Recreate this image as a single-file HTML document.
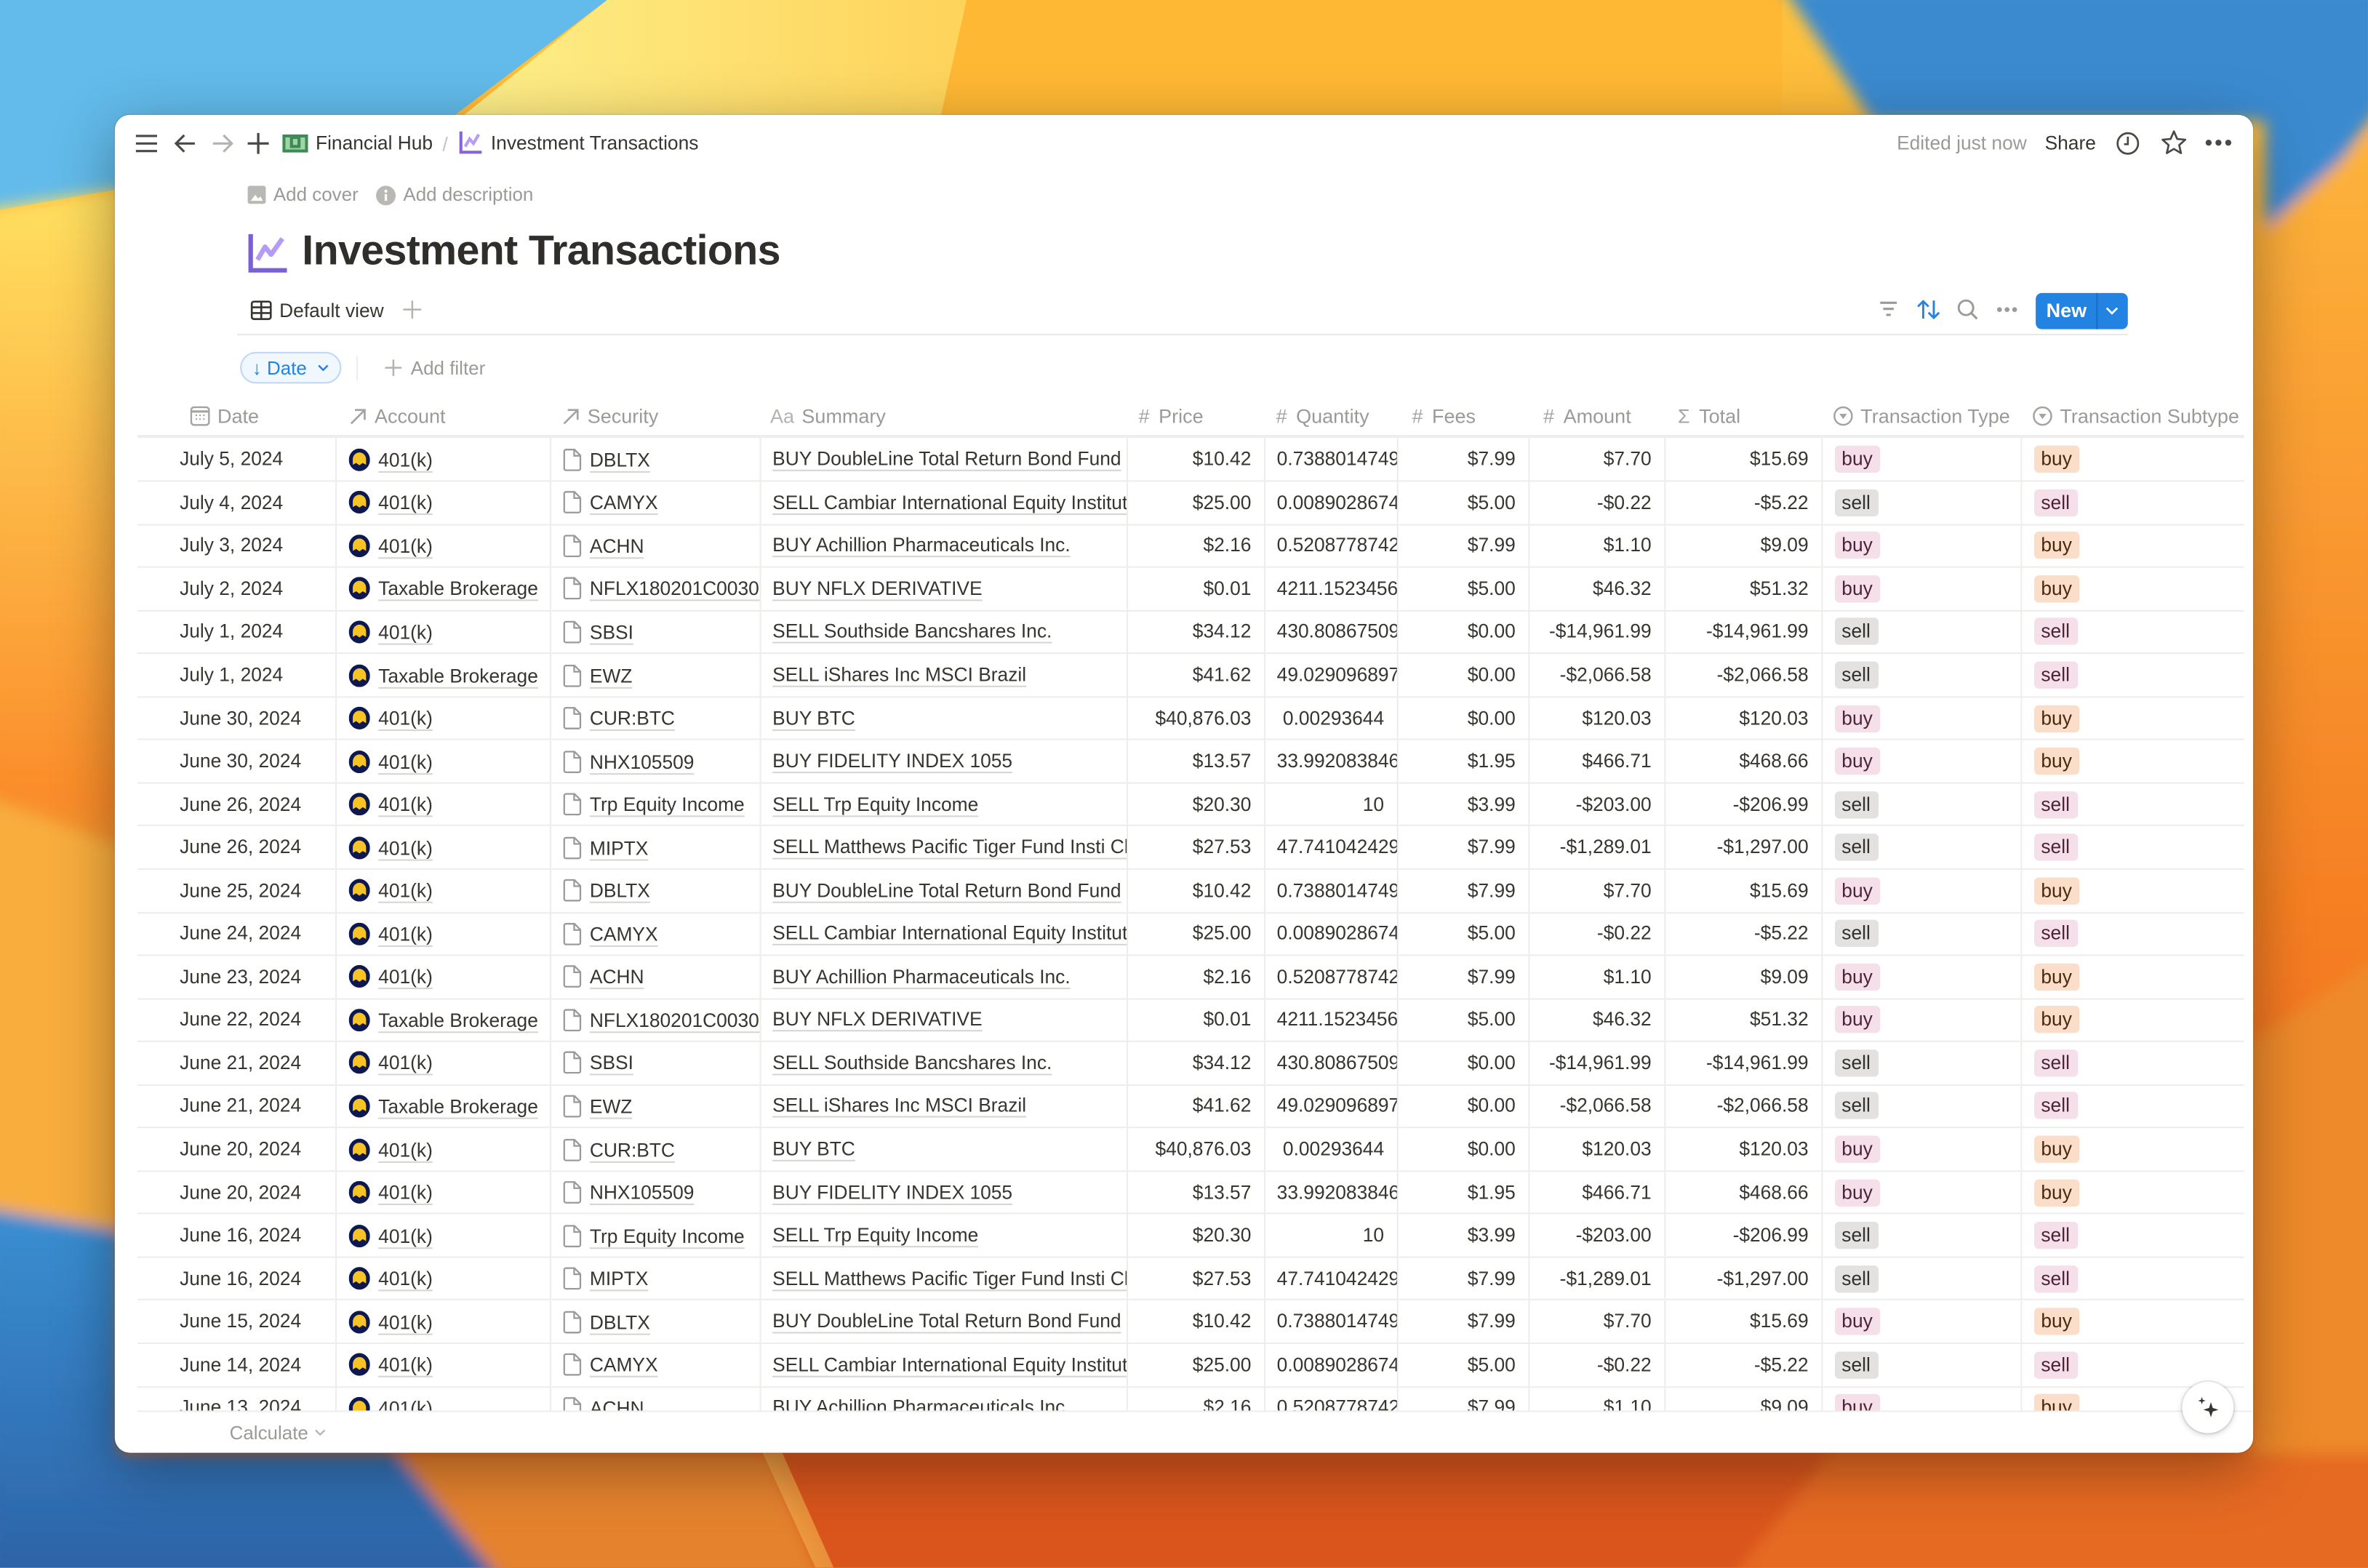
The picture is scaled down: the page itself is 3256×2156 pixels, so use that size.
<!DOCTYPE html>
<html><head><meta charset="utf-8">
<style>
*{margin:0;padding:0;box-sizing:border-box}
html,body{width:3256px;height:2156px;overflow:hidden;background:#e8822c}
#s{position:absolute;left:0;top:0;width:1568px;height:1038px;transform:scale(2.0765);transform-origin:0 0;font-family:"Liberation Sans",sans-serif;color:#37352f}
.bg{position:absolute;left:0;top:0}
.win{position:absolute;left:76px;top:76px;width:1416px;height:886px;background:#fff;border-radius:10px;box-shadow:0 10px 40px rgba(0,0,0,.35),0 0 0 .5px rgba(0,0,0,.15);overflow:hidden}
.a{position:absolute;white-space:nowrap}
.g{color:#9b9a97}
svg{display:block}
.tb{position:absolute;left:91px;top:290px;width:1395px;height:644px;overflow:hidden}
table{border-collapse:collapse;table-layout:fixed;width:1395px;font-size:12.7px}
td{height:28.55px;border-bottom:1px solid #ededeb;border-left:1px solid #ededeb;white-space:nowrap;overflow:hidden;padding:0 8px;vertical-align:middle}
td:first-child{border-left:none;padding-left:28px}
td:last-child{border-right:1px solid #ededeb}
.r{text-align:right}
.u{text-decoration:underline;text-decoration-color:#d6d5d2;text-underline-offset:3px;text-decoration-thickness:1px}
.ic{display:inline-block;vertical-align:-3px;margin-right:6px}
.t{display:inline-block;padding:0 5px;border-radius:3px;line-height:18px;font-size:12.7px}
.pb{background:#f5e0e9;color:#4c2337}
.gs{background:#e3e2e0;color:#32302c}
.ob{background:#fadec9;color:#49290e}
.hd{position:absolute;top:262px;height:27px;font-size:13px;color:#9b9a97;display:flex;align-items:center;white-space:nowrap}
.hd svg{margin-right:5px}
</style></head><body><div id="s">
<svg class="bg" width="1568" height="1038" viewBox="0 0 1568 1038">
<defs>
<linearGradient id="o1" x1="0" y1="0" x2="0" y2="1"><stop offset="0" stop-color="#ffc23c"/><stop offset=".6" stop-color="#f5892a"/><stop offset="1" stop-color="#df5a1e"/></linearGradient>
<linearGradient id="bl" x1="0" y1="0" x2="0" y2="1"><stop offset="0" stop-color="#3a8fd2"/><stop offset="1" stop-color="#2c62a6"/></linearGradient>
<linearGradient id="ly" x1="0" y1="0" x2="0" y2="1"><stop offset="0" stop-color="#ffe060"/><stop offset="1" stop-color="#fb8a28"/></linearGradient>
<linearGradient id="yt" x1="0" y1="0" x2="1" y2="0"><stop offset="0" stop-color="#fdf08c"/><stop offset="1" stop-color="#fed35a"/></linearGradient>
<linearGradient id="rs" x1="0" y1="0" x2="0" y2="1"><stop offset="0" stop-color="#fdb43c"/><stop offset="1" stop-color="#f4761f"/></linearGradient>
<filter id="bf"><feGaussianBlur stdDeviation="5"/></filter>
</defs>
<rect width="1568" height="1038" fill="url(#o1)"/>
<rect x="620" y="0" width="560" height="80" fill="#ffb834"/>
<polygon points="402,0 640,0 620,90 290,90" fill="url(#yt)"/>
<polygon points="0,0 402,0 296,80 80,125 0,139" fill="#62bbea"/>
<g filter="url(#bf)">
<polygon points="1180,-10 1580,-10 1580,66 1500,175 1500,80 1240,80" fill="#3a8ad0"/>
<polygon points="-10,139 80,125 80,540 -10,528" fill="url(#ly)"/>
<polygon points="-10,528 80,560 80,820 -10,805" fill="#f8ad3c"/>
<polygon points="-10,800 80,815 80,962 262,962 333,1048 -10,1048" fill="url(#bl)"/>
<polygon points="1490,160 1580,80 1580,630 1490,690" fill="url(#rs)"/>
<polygon points="1490,690 1580,630 1580,1048 1490,1048" fill="#ee8a2c"/>
<polygon points="262,962 510,962 545,1048 333,1048" fill="#e4822e"/>
<polygon points="510,962 1212,962 1145,1048 545,1048" fill="#d9541f"/>
<polygon points="1212,962 1580,962 1580,1048 1145,1048" fill="#e66a22"/>
</g>
<polygon points="505,962 518,962 552,1038 540,1038" fill="#f0a848" opacity=".7"/>
</svg>
<div class="win"></div>

<!-- top bar -->
<svg class="a" style="left:89px;top:88px" width="16" height="14" viewBox="0 0 16 14"><path d="M1 2h14M1 7h14M1 12h14" stroke="#4a4945" stroke-width="1.5"/></svg>
<svg class="a" style="left:115px;top:88px" width="15" height="14" viewBox="0 0 15 14"><path d="M14 7H2M7 1.5L1.5 7 7 12.5" stroke="#4a4945" stroke-width="1.5" fill="none"/></svg>
<svg class="a" style="left:140px;top:88px" width="15" height="14" viewBox="0 0 15 14"><path d="M1 7h12M8 1.5l5.5 5.5L8 12.5" stroke="#b4b3b0" stroke-width="1.5" fill="none"/></svg>
<svg class="a" style="left:164px;top:88px" width="14" height="14" viewBox="0 0 14 14"><path d="M7 0v14M0 7h14" stroke="#4a4945" stroke-width="1.6"/></svg>
<svg class="a" style="left:187px;top:89px" width="17" height="12" viewBox="0 0 17 12"><rect x="0" y="0" width="17" height="12" fill="#3d8a55"/><rect x="2" y="2" width="13" height="8" fill="#9fd3a8"/><rect x="5" y="2" width="7" height="7" fill="#3d8a55"/><rect x="7" y="3" width="3" height="4" fill="#9fd3a8"/></svg>
<div class="a" style="left:209px;top:88px;font-size:12.7px">Financial Hub</div>
<div class="a g" style="left:293px;top:88px;font-size:13px;color:#c4c3c0">/</div>
<svg class="a" style="left:304px;top:87px" width="15" height="15" viewBox="0 0 15 15"><path d="M1.2 0v13.8H15" stroke="#8466d8" stroke-width="2" fill="none"/><path d="M4 10l3-5 2.5 3L13 2" stroke="#b79cf4" stroke-width="2" fill="none"/></svg>
<div class="a" style="left:325px;top:88px;font-size:12.7px">Investment Transactions</div>
<div class="a g" style="left:1256px;top:88px;font-size:12.7px">Edited just now</div>
<div class="a" style="left:1354px;top:88px;font-size:12.7px">Share</div>
<svg class="a" style="left:1401px;top:87px" width="16" height="16" viewBox="0 0 16 16"><circle cx="8" cy="8" r="6.8" stroke="#4a4945" stroke-width="1.3" fill="none"/><path d="M8 3.5V8.5H5.5" stroke="#4a4945" stroke-width="1.3" fill="none"/></svg>
<svg class="a" style="left:1431px;top:86px" width="17" height="17" viewBox="0 0 17 17"><path d="M8.5 1l2.2 5 5.3.5-4 3.6 1.2 5.3-4.7-2.8-4.7 2.8 1.2-5.3-4-3.6 5.3-.5z" stroke="#4a4945" stroke-width="1.3" fill="none" stroke-linejoin="round"/></svg>
<svg class="a" style="left:1460px;top:92px" width="18" height="5" viewBox="0 0 18 5"><circle cx="2.5" cy="2.5" r="2" fill="#4a4945"/><circle cx="9" cy="2.5" r="2" fill="#4a4945"/><circle cx="15.5" cy="2.5" r="2" fill="#4a4945"/></svg>

<!-- page header -->
<svg class="a" style="left:164px;top:123px" width="12" height="12" viewBox="0 0 12 12"><rect width="12" height="12" rx="1.5" fill="#b9b8b5"/><path d="M2 10l3-4 2 2.5 1.5-1.5L10 10z" fill="#fff"/></svg>
<div class="a g" style="left:181px;top:122px;font-size:12.5px">Add cover</div>
<svg class="a" style="left:249px;top:123px" width="13" height="13" viewBox="0 0 13 13"><circle cx="6.5" cy="6.5" r="6.5" fill="#b9b8b5"/><rect x="5.7" y="5.5" width="1.6" height="4.5" fill="#fff"/><circle cx="6.5" cy="3.6" r="1" fill="#fff"/></svg>
<div class="a g" style="left:267px;top:122px;font-size:12.5px">Add description</div>
<svg class="a" style="left:164px;top:155px" width="26" height="26" viewBox="0 0 26 26"><path d="M2 0v24h24" stroke="#7b5fd6" stroke-width="3" fill="none"/><path d="M6.5 17l5-8.5 4 5L23 3" stroke="#b59bf5" stroke-width="3.2" fill="none" stroke-linejoin="round"/></svg>
<div class="a" style="left:200px;top:150px;font-size:27.6px;font-weight:bold;letter-spacing:-.3px;color:#2f2e2a">Investment Transactions</div>

<svg class="a" style="left:166px;top:199px" width="14" height="13" viewBox="0 0 14 13"><rect x=".7" y=".7" width="12.6" height="11.6" rx="1.5" stroke="#37352f" stroke-width="1.3" fill="none"/><path d="M.7 4.5h12.6M.7 8.3h12.6M7 .7v11.6" stroke="#37352f" stroke-width="1.3"/></svg>
<div class="a" style="left:185px;top:199px;font-size:12.7px;font-weight:500">Default view</div>
<svg class="a" style="left:267px;top:199px" width="12" height="12" viewBox="0 0 12 12"><path d="M6 0v12M0 6h12" stroke="#b4b3b0" stroke-width="1.2"/></svg>
<div class="a" style="left:157px;top:221px;width:1252px;height:1px;background:#e9e9e7"></div>

<svg class="a" style="left:1244px;top:199px" width="13" height="11" viewBox="0 0 13 11"><path d="M1 1.5h11M3 5.5h7M5 9.5h3" stroke="#9b9a97" stroke-width="1.5"/></svg>
<svg class="a" style="left:1269px;top:198px" width="16" height="14" viewBox="0 0 16 14"><path d="M4.5 13V1.5M1 5l3.5-3.5L8 5M11.5 1v11.5M8 9l3.5 3.5L15 9" stroke="#2383e2" stroke-width="1.4" fill="none"/></svg>
<svg class="a" style="left:1296px;top:198px" width="14" height="14" viewBox="0 0 14 14"><circle cx="5.8" cy="5.8" r="4.8" stroke="#9b9a97" stroke-width="1.4" fill="none"/><path d="M9.3 9.3l3.8 3.8" stroke="#9b9a97" stroke-width="1.5"/></svg>
<svg class="a" style="left:1322px;top:203px" width="14" height="4" viewBox="0 0 14 4"><circle cx="2" cy="2" r="1.6" fill="#9b9a97"/><circle cx="7" cy="2" r="1.6" fill="#9b9a97"/><circle cx="12" cy="2" r="1.6" fill="#9b9a97"/></svg>
<div class="a" style="left:1348px;top:194px;width:61px;height:24px;background:#2383e2;border-radius:4px"></div>
<div class="a" style="left:1388px;top:194px;width:1px;height:24px;background:#1b6fc2"></div>
<div class="a" style="left:1355px;top:198px;font-size:13px;font-weight:bold;color:#fff">New</div>
<svg class="a" style="left:1394px;top:203px" width="9" height="6" viewBox="0 0 9 6"><path d="M1 1l3.5 3.5L8 1" stroke="#fff" stroke-width="1.3" fill="none"/></svg>

<div class="a" style="left:159px;top:233px;width:67px;height:21px;border:1px solid #bcd8f5;background:#f0f7fe;border-radius:11px"></div>
<div class="a" style="left:167px;top:237px;font-size:12.5px;color:#2383e2">↓ Date</div>
<svg class="a" style="left:210px;top:241px" width="8" height="5" viewBox="0 0 8 5"><path d="M1 1l3 3 3-3" stroke="#2383e2" stroke-width="1.2" fill="none"/></svg>
<div class="a" style="left:236px;top:236px;width:1px;height:16px;background:#ededeb"></div>
<svg class="a" style="left:255px;top:238px" width="11" height="11" viewBox="0 0 11 11"><path d="M5.5 0v11M0 5.5h11" stroke="#b4b3b0" stroke-width="1.2"/></svg>
<div class="a g" style="left:272px;top:237px;font-size:12.5px">Add filter</div>

<!-- header -->
<div class="hd" style="left:126px"><svg width="13" height="13" viewBox="0 0 13 13"><rect x=".6" y=".6" width="11.8" height="11.8" rx="2" stroke="#a5a4a1" stroke-width="1.2" fill="none"/><path d="M.6 3.5h11.8" stroke="#a5a4a1" stroke-width="1.5"/><path d="M3.5 6h1M6 6h1M8.5 6h1M3.5 8.5h1M6 8.5h1M8.5 8.5h1" stroke="#a5a4a1"/></svg>Date</div>
<div class="hd" style="left:231px"><svg width="12" height="12" viewBox="0 0 12 12"><path d="M1.5 10.5L10.5 1.5M4 1.5h6.5V8" stroke="#a5a4a1" stroke-width="1.3" fill="none"/></svg>Account</div>
<div class="hd" style="left:372px"><svg width="12" height="12" viewBox="0 0 12 12"><path d="M1.5 10.5L10.5 1.5M4 1.5h6.5V8" stroke="#a5a4a1" stroke-width="1.3" fill="none"/></svg>Security</div>
<div class="hd" style="left:510px"><span style="color:#b4b3b0;margin-right:5px">Aa</span>Summary</div>
<div class="hd" style="left:754px"><span style="margin-right:6px;color:#a5a4a1">#</span>Price</div>
<div class="hd" style="left:845px"><span style="margin-right:6px;color:#a5a4a1">#</span>Quantity</div>
<div class="hd" style="left:935px"><span style="margin-right:6px;color:#a5a4a1">#</span>Fees</div>
<div class="hd" style="left:1022px"><span style="margin-right:6px;color:#a5a4a1">#</span>Amount</div>
<div class="hd" style="left:1111px"><span style="margin-right:6px;color:#a5a4a1">Σ</span>Total</div>
<div class="hd" style="left:1214px"><svg width="13" height="13" viewBox="0 0 13 13"><circle cx="6.5" cy="6.5" r="5.8" stroke="#a5a4a1" stroke-width="1.2" fill="none"/><path d="M4 5h5L6.5 8.5z" fill="#a5a4a1"/></svg>Transaction Type</div>
<div class="hd" style="left:1346px"><svg width="13" height="13" viewBox="0 0 13 13"><circle cx="6.5" cy="6.5" r="5.8" stroke="#a5a4a1" stroke-width="1.2" fill="none"/><path d="M4 5h5L6.5 8.5z" fill="#a5a4a1"/></svg>Transaction Subtype</div>
<div class="a" style="left:91px;top:288px;width:1395px;height:2px;background:#ededeb"></div>

<svg width="0" height="0" style="position:absolute"><defs>
<symbol id="ac" viewBox="0 0 14 15"><ellipse cx="7" cy="7.5" rx="7" ry="7.5" fill="#0d1850"/><path d="M2.6 7.2a4.4 4.6 0 0 1 8.8 0v3.6l-2.2-1.3-2.2 1.6-2.2-1.6-2.2 1.3z" fill="#f7c325"/></symbol>
<symbol id="dc" viewBox="0 0 12 15"><path d="M1.8.7h5.6l3.9 3.9v8.6a1.2 1.2 0 0 1-1.2 1.2H1.8a1.2 1.2 0 0 1-1.2-1.2V1.9A1.2 1.2 0 0 1 1.8.7zM7.2.9v3.9h4" stroke="#9b9a97" stroke-width="1.1" fill="none"/></symbol>
</defs></svg>

<div class="tb"><table>
<colgroup><col style="width:131px"><col style="width:142px"><col style="width:139px"><col style="width:243px"><col style="width:91px"><col style="width:88px"><col style="width:87px"><col style="width:90px"><col style="width:104px"><col style="width:132px"><col style="width:148px"></colgroup>
<tr><td>July 5, 2024</td><td><svg class="ic" width="14" height="15"><use href="#ac"/></svg><span class="u">401(k)</span></td><td><svg class="ic" width="12" height="15"><use href="#dc"/></svg><span class="u">DBLTX</span></td><td><span class="u">BUY DoubleLine Total Return Bond Fund</span></td><td class="r">$10.42</td><td class="r">0.7388014749</td><td class="r">$7.99</td><td class="r">$7.70</td><td class="r">$15.69</td><td><span class="t pb">buy</span></td><td><span class="t ob">buy</span></td></tr>
<tr><td>July 4, 2024</td><td><svg class="ic" width="14" height="15"><use href="#ac"/></svg><span class="u">401(k)</span></td><td><svg class="ic" width="12" height="15"><use href="#dc"/></svg><span class="u">CAMYX</span></td><td><span class="u">SELL Cambiar International Equity Institutional</span></td><td class="r">$25.00</td><td class="r">0.0089028674</td><td class="r">$5.00</td><td class="r">-$0.22</td><td class="r">-$5.22</td><td><span class="t gs">sell</span></td><td><span class="t pb">sell</span></td></tr>
<tr><td>July 3, 2024</td><td><svg class="ic" width="14" height="15"><use href="#ac"/></svg><span class="u">401(k)</span></td><td><svg class="ic" width="12" height="15"><use href="#dc"/></svg><span class="u">ACHN</span></td><td><span class="u">BUY Achillion Pharmaceuticals Inc.</span></td><td class="r">$2.16</td><td class="r">0.5208778742</td><td class="r">$7.99</td><td class="r">$1.10</td><td class="r">$9.09</td><td><span class="t pb">buy</span></td><td><span class="t ob">buy</span></td></tr>
<tr><td>July 2, 2024</td><td><svg class="ic" width="14" height="15"><use href="#ac"/></svg><span class="u">Taxable Brokerage</span></td><td><svg class="ic" width="12" height="15"><use href="#dc"/></svg><span class="u">NFLX180201C00300000</span></td><td><span class="u">BUY NFLX DERIVATIVE</span></td><td class="r">$0.01</td><td class="r">4211.1523456</td><td class="r">$5.00</td><td class="r">$46.32</td><td class="r">$51.32</td><td><span class="t pb">buy</span></td><td><span class="t ob">buy</span></td></tr>
<tr><td>July 1, 2024</td><td><svg class="ic" width="14" height="15"><use href="#ac"/></svg><span class="u">401(k)</span></td><td><svg class="ic" width="12" height="15"><use href="#dc"/></svg><span class="u">SBSI</span></td><td><span class="u">SELL Southside Bancshares Inc.</span></td><td class="r">$34.12</td><td class="r">430.80867509</td><td class="r">$0.00</td><td class="r">-$14,961.99</td><td class="r">-$14,961.99</td><td><span class="t gs">sell</span></td><td><span class="t pb">sell</span></td></tr>
<tr><td>July 1, 2024</td><td><svg class="ic" width="14" height="15"><use href="#ac"/></svg><span class="u">Taxable Brokerage</span></td><td><svg class="ic" width="12" height="15"><use href="#dc"/></svg><span class="u">EWZ</span></td><td><span class="u">SELL iShares Inc MSCI Brazil</span></td><td class="r">$41.62</td><td class="r">49.029096897</td><td class="r">$0.00</td><td class="r">-$2,066.58</td><td class="r">-$2,066.58</td><td><span class="t gs">sell</span></td><td><span class="t pb">sell</span></td></tr>
<tr><td>June 30, 2024</td><td><svg class="ic" width="14" height="15"><use href="#ac"/></svg><span class="u">401(k)</span></td><td><svg class="ic" width="12" height="15"><use href="#dc"/></svg><span class="u">CUR:BTC</span></td><td><span class="u">BUY BTC</span></td><td class="r">$40,876.03</td><td class="r">0.00293644</td><td class="r">$0.00</td><td class="r">$120.03</td><td class="r">$120.03</td><td><span class="t pb">buy</span></td><td><span class="t ob">buy</span></td></tr>
<tr><td>June 30, 2024</td><td><svg class="ic" width="14" height="15"><use href="#ac"/></svg><span class="u">401(k)</span></td><td><svg class="ic" width="12" height="15"><use href="#dc"/></svg><span class="u">NHX105509</span></td><td><span class="u">BUY FIDELITY INDEX 1055</span></td><td class="r">$13.57</td><td class="r">33.992083846</td><td class="r">$1.95</td><td class="r">$466.71</td><td class="r">$468.66</td><td><span class="t pb">buy</span></td><td><span class="t ob">buy</span></td></tr>
<tr><td>June 26, 2024</td><td><svg class="ic" width="14" height="15"><use href="#ac"/></svg><span class="u">401(k)</span></td><td><svg class="ic" width="12" height="15"><use href="#dc"/></svg><span class="u">Trp Equity Income</span></td><td><span class="u">SELL Trp Equity Income</span></td><td class="r">$20.30</td><td class="r">10</td><td class="r">$3.99</td><td class="r">-$203.00</td><td class="r">-$206.99</td><td><span class="t gs">sell</span></td><td><span class="t pb">sell</span></td></tr>
<tr><td>June 26, 2024</td><td><svg class="ic" width="14" height="15"><use href="#ac"/></svg><span class="u">401(k)</span></td><td><svg class="ic" width="12" height="15"><use href="#dc"/></svg><span class="u">MIPTX</span></td><td><span class="u">SELL Matthews Pacific Tiger Fund Insti Class</span></td><td class="r">$27.53</td><td class="r">47.741042429</td><td class="r">$7.99</td><td class="r">-$1,289.01</td><td class="r">-$1,297.00</td><td><span class="t gs">sell</span></td><td><span class="t pb">sell</span></td></tr>
<tr><td>June 25, 2024</td><td><svg class="ic" width="14" height="15"><use href="#ac"/></svg><span class="u">401(k)</span></td><td><svg class="ic" width="12" height="15"><use href="#dc"/></svg><span class="u">DBLTX</span></td><td><span class="u">BUY DoubleLine Total Return Bond Fund</span></td><td class="r">$10.42</td><td class="r">0.7388014749</td><td class="r">$7.99</td><td class="r">$7.70</td><td class="r">$15.69</td><td><span class="t pb">buy</span></td><td><span class="t ob">buy</span></td></tr>
<tr><td>June 24, 2024</td><td><svg class="ic" width="14" height="15"><use href="#ac"/></svg><span class="u">401(k)</span></td><td><svg class="ic" width="12" height="15"><use href="#dc"/></svg><span class="u">CAMYX</span></td><td><span class="u">SELL Cambiar International Equity Institutional</span></td><td class="r">$25.00</td><td class="r">0.0089028674</td><td class="r">$5.00</td><td class="r">-$0.22</td><td class="r">-$5.22</td><td><span class="t gs">sell</span></td><td><span class="t pb">sell</span></td></tr>
<tr><td>June 23, 2024</td><td><svg class="ic" width="14" height="15"><use href="#ac"/></svg><span class="u">401(k)</span></td><td><svg class="ic" width="12" height="15"><use href="#dc"/></svg><span class="u">ACHN</span></td><td><span class="u">BUY Achillion Pharmaceuticals Inc.</span></td><td class="r">$2.16</td><td class="r">0.5208778742</td><td class="r">$7.99</td><td class="r">$1.10</td><td class="r">$9.09</td><td><span class="t pb">buy</span></td><td><span class="t ob">buy</span></td></tr>
<tr><td>June 22, 2024</td><td><svg class="ic" width="14" height="15"><use href="#ac"/></svg><span class="u">Taxable Brokerage</span></td><td><svg class="ic" width="12" height="15"><use href="#dc"/></svg><span class="u">NFLX180201C00300000</span></td><td><span class="u">BUY NFLX DERIVATIVE</span></td><td class="r">$0.01</td><td class="r">4211.1523456</td><td class="r">$5.00</td><td class="r">$46.32</td><td class="r">$51.32</td><td><span class="t pb">buy</span></td><td><span class="t ob">buy</span></td></tr>
<tr><td>June 21, 2024</td><td><svg class="ic" width="14" height="15"><use href="#ac"/></svg><span class="u">401(k)</span></td><td><svg class="ic" width="12" height="15"><use href="#dc"/></svg><span class="u">SBSI</span></td><td><span class="u">SELL Southside Bancshares Inc.</span></td><td class="r">$34.12</td><td class="r">430.80867509</td><td class="r">$0.00</td><td class="r">-$14,961.99</td><td class="r">-$14,961.99</td><td><span class="t gs">sell</span></td><td><span class="t pb">sell</span></td></tr>
<tr><td>June 21, 2024</td><td><svg class="ic" width="14" height="15"><use href="#ac"/></svg><span class="u">Taxable Brokerage</span></td><td><svg class="ic" width="12" height="15"><use href="#dc"/></svg><span class="u">EWZ</span></td><td><span class="u">SELL iShares Inc MSCI Brazil</span></td><td class="r">$41.62</td><td class="r">49.029096897</td><td class="r">$0.00</td><td class="r">-$2,066.58</td><td class="r">-$2,066.58</td><td><span class="t gs">sell</span></td><td><span class="t pb">sell</span></td></tr>
<tr><td>June 20, 2024</td><td><svg class="ic" width="14" height="15"><use href="#ac"/></svg><span class="u">401(k)</span></td><td><svg class="ic" width="12" height="15"><use href="#dc"/></svg><span class="u">CUR:BTC</span></td><td><span class="u">BUY BTC</span></td><td class="r">$40,876.03</td><td class="r">0.00293644</td><td class="r">$0.00</td><td class="r">$120.03</td><td class="r">$120.03</td><td><span class="t pb">buy</span></td><td><span class="t ob">buy</span></td></tr>
<tr><td>June 20, 2024</td><td><svg class="ic" width="14" height="15"><use href="#ac"/></svg><span class="u">401(k)</span></td><td><svg class="ic" width="12" height="15"><use href="#dc"/></svg><span class="u">NHX105509</span></td><td><span class="u">BUY FIDELITY INDEX 1055</span></td><td class="r">$13.57</td><td class="r">33.992083846</td><td class="r">$1.95</td><td class="r">$466.71</td><td class="r">$468.66</td><td><span class="t pb">buy</span></td><td><span class="t ob">buy</span></td></tr>
<tr><td>June 16, 2024</td><td><svg class="ic" width="14" height="15"><use href="#ac"/></svg><span class="u">401(k)</span></td><td><svg class="ic" width="12" height="15"><use href="#dc"/></svg><span class="u">Trp Equity Income</span></td><td><span class="u">SELL Trp Equity Income</span></td><td class="r">$20.30</td><td class="r">10</td><td class="r">$3.99</td><td class="r">-$203.00</td><td class="r">-$206.99</td><td><span class="t gs">sell</span></td><td><span class="t pb">sell</span></td></tr>
<tr><td>June 16, 2024</td><td><svg class="ic" width="14" height="15"><use href="#ac"/></svg><span class="u">401(k)</span></td><td><svg class="ic" width="12" height="15"><use href="#dc"/></svg><span class="u">MIPTX</span></td><td><span class="u">SELL Matthews Pacific Tiger Fund Insti Class</span></td><td class="r">$27.53</td><td class="r">47.741042429</td><td class="r">$7.99</td><td class="r">-$1,289.01</td><td class="r">-$1,297.00</td><td><span class="t gs">sell</span></td><td><span class="t pb">sell</span></td></tr>
<tr><td>June 15, 2024</td><td><svg class="ic" width="14" height="15"><use href="#ac"/></svg><span class="u">401(k)</span></td><td><svg class="ic" width="12" height="15"><use href="#dc"/></svg><span class="u">DBLTX</span></td><td><span class="u">BUY DoubleLine Total Return Bond Fund</span></td><td class="r">$10.42</td><td class="r">0.7388014749</td><td class="r">$7.99</td><td class="r">$7.70</td><td class="r">$15.69</td><td><span class="t pb">buy</span></td><td><span class="t ob">buy</span></td></tr>
<tr><td>June 14, 2024</td><td><svg class="ic" width="14" height="15"><use href="#ac"/></svg><span class="u">401(k)</span></td><td><svg class="ic" width="12" height="15"><use href="#dc"/></svg><span class="u">CAMYX</span></td><td><span class="u">SELL Cambiar International Equity Institutional</span></td><td class="r">$25.00</td><td class="r">0.0089028674</td><td class="r">$5.00</td><td class="r">-$0.22</td><td class="r">-$5.22</td><td><span class="t gs">sell</span></td><td><span class="t pb">sell</span></td></tr>
<tr><td>June 13, 2024</td><td><svg class="ic" width="14" height="15"><use href="#ac"/></svg><span class="u">401(k)</span></td><td><svg class="ic" width="12" height="15"><use href="#dc"/></svg><span class="u">ACHN</span></td><td><span class="u">BUY Achillion Pharmaceuticals Inc.</span></td><td class="r">$2.16</td><td class="r">0.5208778742</td><td class="r">$7.99</td><td class="r">$1.10</td><td class="r">$9.09</td><td><span class="t pb">buy</span></td><td><span class="t ob">buy</span></td></tr>
</table></div>
<div class="a" style="left:91px;top:934px;width:1400px;height:1px;background:#ededeb"></div>
<div class="a g" style="left:152px;top:942px;font-size:12.5px">Calculate</div>
<svg class="a" style="left:208px;top:946px" width="8" height="5" viewBox="0 0 8 5"><path d="M1 1l3 3 3-3" stroke="#b4b3b0" stroke-width="1.1" fill="none"/></svg>
<div class="a" style="left:1445px;top:915px;width:34px;height:34px;border-radius:50%;background:#fff;box-shadow:0 1px 4px rgba(0,0,0,.2),0 0 0 1px rgba(0,0,0,.06)"></div>
<svg class="a" style="left:1454px;top:924px" width="16" height="16" viewBox="0 0 16 16"><path d="M10 4.5l1.2 3.8 3.8 1.2-3.8 1.2L10 14.5l-1.2-3.8L5 9.5l3.8-1.2z" fill="#37352f"/><path d="M4 1l.6 1.9 1.9.6-1.9.6L4 6l-.6-1.9-1.9-.6 1.9-.6z" fill="#37352f"/></svg>
</div></body></html>
